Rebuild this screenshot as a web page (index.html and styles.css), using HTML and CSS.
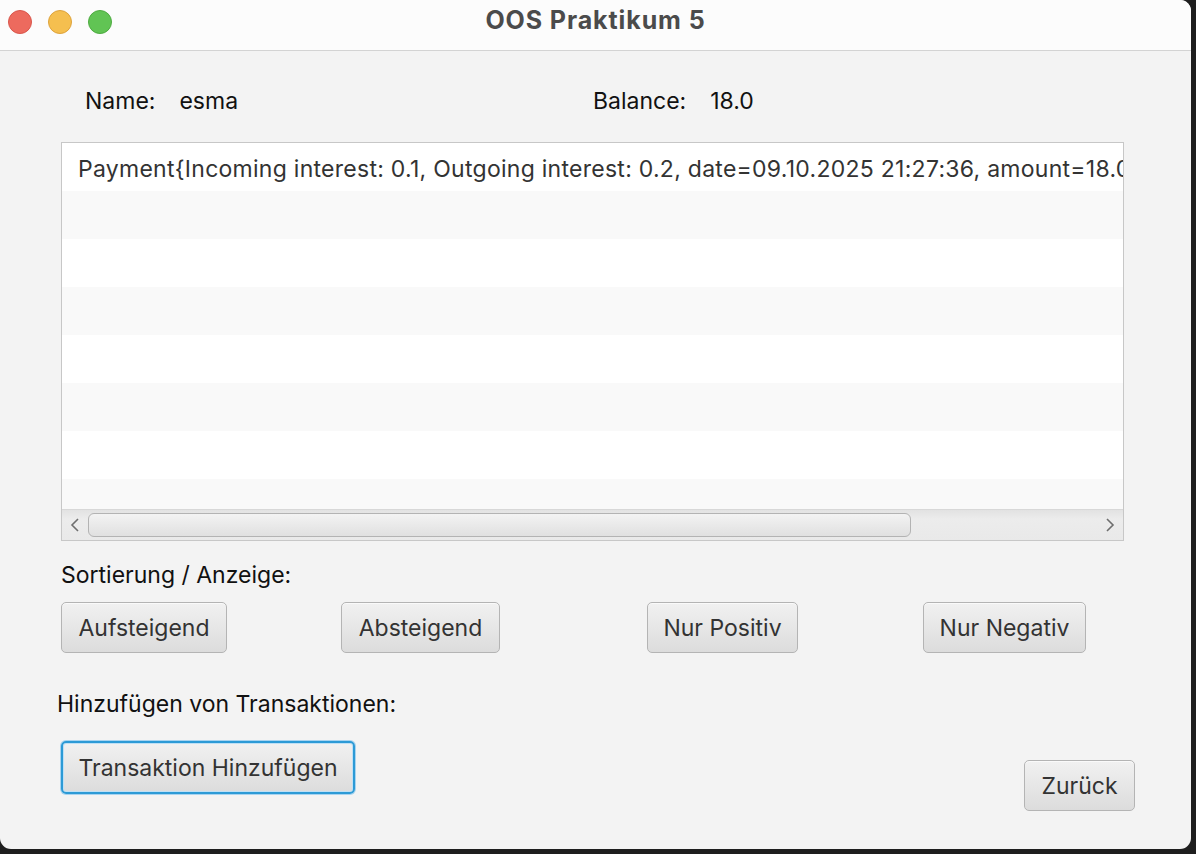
FILE: index.html
```html
<!DOCTYPE html>
<html>
<head>
<meta charset="utf-8">
<title>OOS Praktikum 5</title>
<link rel="stylesheet" href="styles.css">
</head>
<body>
<div class="window">
  <div class="titlebar">
    <div class="lights">
      <span class="light red"></span>
      <span class="light yellow"></span>
      <span class="light green"></span>
    </div>
    <div class="title">OOS Praktikum 5</div>
  </div>
  <div class="content">
    <div class="info">
      <div class="pair name-pair"><span class="lbl">Name:</span><span class="val">esma</span></div>
      <div class="pair bal-pair"><span class="lbl">Balance:</span><span class="val">18.0</span></div>
    </div>
    <div class="list">
      <div class="rows">
        <div class="row">Payment{Incoming interest: 0.1, Outgoing interest: 0.2, date=09.10.2025 21:27:36, amount=18.0}</div>
        <div class="row"></div>
        <div class="row"></div>
        <div class="row"></div>
        <div class="row"></div>
        <div class="row"></div>
        <div class="row"></div>
        <div class="row"></div>
      </div>
      <div class="hscroll">
        <span class="arrow">
          <svg width="10" height="14" viewBox="0 0 10 14"><path d="M8 1 L2 7 L8 13" fill="none" stroke="#6e6e6e" stroke-width="1.6"/></svg>
        </span>
        <div class="track"><div class="thumb"></div></div>
        <span class="arrow">
          <svg width="10" height="14" viewBox="0 0 10 14"><path d="M2 1 L8 7 L2 13" fill="none" stroke="#6e6e6e" stroke-width="1.6"/></svg>
        </span>
      </div>
    </div>
    <div class="section-label sort-label">Sortierung / Anzeige:</div>
    <div class="sort-buttons">
      <button class="btn b1">Aufsteigend</button>
      <button class="btn b2">Absteigend</button>
      <button class="btn b3">Nur Positiv</button>
      <button class="btn b4">Nur Negativ</button>
    </div>
    <div class="section-label add-label">Hinzufügen von Transaktionen:</div>
    <div class="bottom-row">
      <button class="btn focused">Transaktion Hinzufügen</button>
      <button class="btn back">Zurück</button>
    </div>
  </div>
</div>
</body>
</html>
```
FILE: styles.css
```css
* { box-sizing: border-box; }
html, body {
  margin: 0;
  padding: 0;
  background: #1e1e1e;
  width: 1196px;
  height: 854px;
  overflow: hidden;
}
.window {
  width: 1191px;
  height: 849px;
  background: #f3f3f3;
  border-radius: 0 11px 11px 11px;
  overflow: hidden;
  font-family: Inter, "Noto Sans", sans-serif;
}
.titlebar {
  height: 51px;
  background: #fcfcfc;
  border-bottom: 1px solid #d3d3d3;
  display: flex;
  align-items: center;
  position: relative;
}
.lights {
  display: flex;
  gap: 16px;
  padding-left: 8px;
  margin-top: -6px;
}
.light {
  width: 24px;
  height: 24px;
  border-radius: 50%;
  display: block;
}
.red { background: #ed6a5e; border: 1px solid #d9564c; }
.yellow { background: #f5bf4f; border: 1px solid #dea33c; }
.green { background: #61c454; border: 1px solid #4eab41; }
.title {
  position: absolute;
  left: 0;
  right: 0;
  top: 5px;
  text-align: center;
  font-weight: 700;
  font-size: 25px;
  color: #4b4b4b;
  letter-spacing: 0.9px;
}
.content {
  padding: 0 0 0 61px;
  color: #111;
}
.info {
  display: flex;
  height: 91px;
  align-items: center;
  padding-top: 9px;
  font-size: 23px;
}
.pair { display: flex; gap: 24px; }
.name-pair { margin-left: 24px; width: 508px; }
.list {
  width: 1063px;
  height: 399px;
  border: 1px solid #c7c7c7;
  background: #ffffff;
  display: flex;
  flex-direction: column;
  overflow: hidden;
}
.rows { flex: 1; overflow: hidden; }
.row {
  height: 48px;
  line-height: 52px;
  padding-left: 16px;
  white-space: nowrap;
  overflow: hidden;
  font-size: 23px;
  letter-spacing: 0.27px;
  color: #333;
  background: #fff;
}
.row:nth-child(even) { background: #f9f9f9; }
.hscroll {
  height: 31px;
  flex: none;
  display: flex;
  align-items: center;
  background: linear-gradient(#e2e2e2, #ececec 30%, #e9e9e9);
  border-top: 1px solid #d8d8d8;
}
.arrow {
  width: 26px;
  display: flex;
  justify-content: center;
  align-items: center;
}
.track { flex: 1; height: 25px; display: flex; align-items: center; }
.thumb {
  width: 823px;
  height: 24px;
  border: 1px solid #b3b3b3;
  border-radius: 6px;
  background: linear-gradient(#f3f3f3, #e0e0e0);
}
.section-label {
  font-size: 23px;
  color: #111;
}
.sort-label { margin-top: 19px; height: 30px; line-height: 30px; }
.sort-buttons {
  display: flex;
  margin-top: 12px;
}
.btn {
  font-family: Inter, "Noto Sans", sans-serif;
  font-size: 23px;
  color: #333;
  height: 51px;
  padding: 0 10px;
  border: 1px solid #b4b4b4;
  border-radius: 5px;
  background: linear-gradient(#f1f1f1, #dcdcdc);
  box-shadow: inset 0 1px 0 #fafafa;
  white-space: nowrap;
}
.b1 { width: 166px; }
.b2 { width: 159px; margin-left: 114px; }
.b3 { width: 151px; margin-left: 147px; }
.b4 { width: 163px; margin-left: 125px; }
.add-label { margin-top: 36px; margin-left: -4px; height: 30px; line-height: 30px; }
.bottom-row {
  display: flex;
  align-items: flex-start;
  margin-top: 22px;
}
.focused {
  width: 294px;
  height: 53px;
  margin-left: 0;
  border: 2px solid #2c9ad6;
  box-shadow: 0 0 0 1px #a8d4f0, inset 0 0 0 1px #bfe0f5;
}
.back {
  width: 111px;
  height: 51px;
  margin-left: 669px;
  margin-top: 19px;
}
```
